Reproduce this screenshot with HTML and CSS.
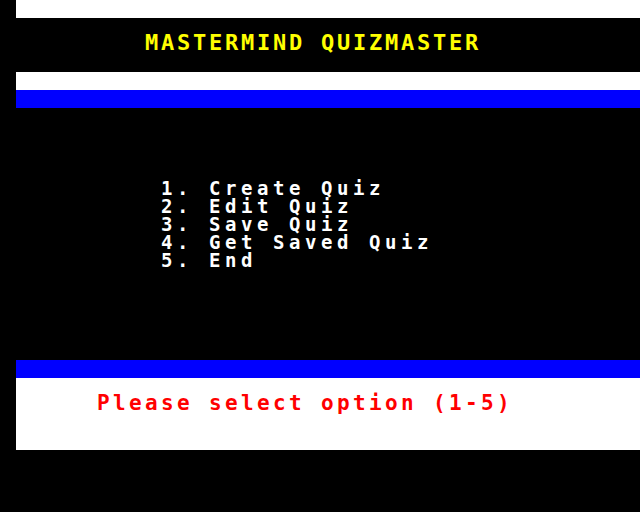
FILE: index.html
```html
<!DOCTYPE html>
<html>
<head>
<meta charset="utf-8">
<title>Mastermind Quizmaster</title>
<link rel="stylesheet" href="styles.css">
</head>
<body>
<div class="screen">
  <div class="band white"></div>
  <div class="title-area">
    <div class="title">MASTERMIND QUIZMASTER</div>
  </div>
  <div class="band white"></div>
  <div class="band blue"></div>
  <div class="menu-area">
    <div class="menu-line">1. Create Quiz</div>
    <div class="menu-line">2. Edit Quiz</div>
    <div class="menu-line">3. Save Quiz</div>
    <div class="menu-line">4. Get Saved Quiz</div>
    <div class="menu-line">5. End</div>
  </div>
  <div class="band blue"></div>
  <div class="prompt-area">
    <div class="prompt">Please select option (1-5)</div>
  </div>
</div>
</body>
</html>
```
FILE: styles.css
```css
html, body {
  margin: 0;
  padding: 0;
  background: #000;
  width: 640px;
  height: 512px;
  overflow: hidden;
}
.screen {
  margin-left: 16px;
  display: flex;
  flex-direction: column;
  font-family: "DejaVu Sans Mono", monospace;
  font-weight: bold;
}
.title, .menu-line, .prompt { white-space: pre; }
.band { height: 18px; }
.white { background: #fff; }
.blue { background: #0000ff; }
.title-area {
  height: 54px;
  box-sizing: border-box;
  padding: 16px 0 0 129px;
}
.title {
  color: #ffff00;
  font-size: 22px;
  line-height: 18px;
  letter-spacing: 2.76px;
}
.menu-area {
  height: 252px;
  box-sizing: border-box;
  padding: 71px 0 0 145px;
}
.menu-line {
  color: #fff;
  font-size: 19px;
  line-height: 18px;
  letter-spacing: 4.56px;
}
.prompt-area {
  height: 72px;
  background: #fff;
  box-sizing: border-box;
  padding: 16px 0 0 81px;
}
.prompt {
  color: #ff0000;
  font-size: 21px;
  line-height: 18px;
  letter-spacing: 3.36px;
}
```
